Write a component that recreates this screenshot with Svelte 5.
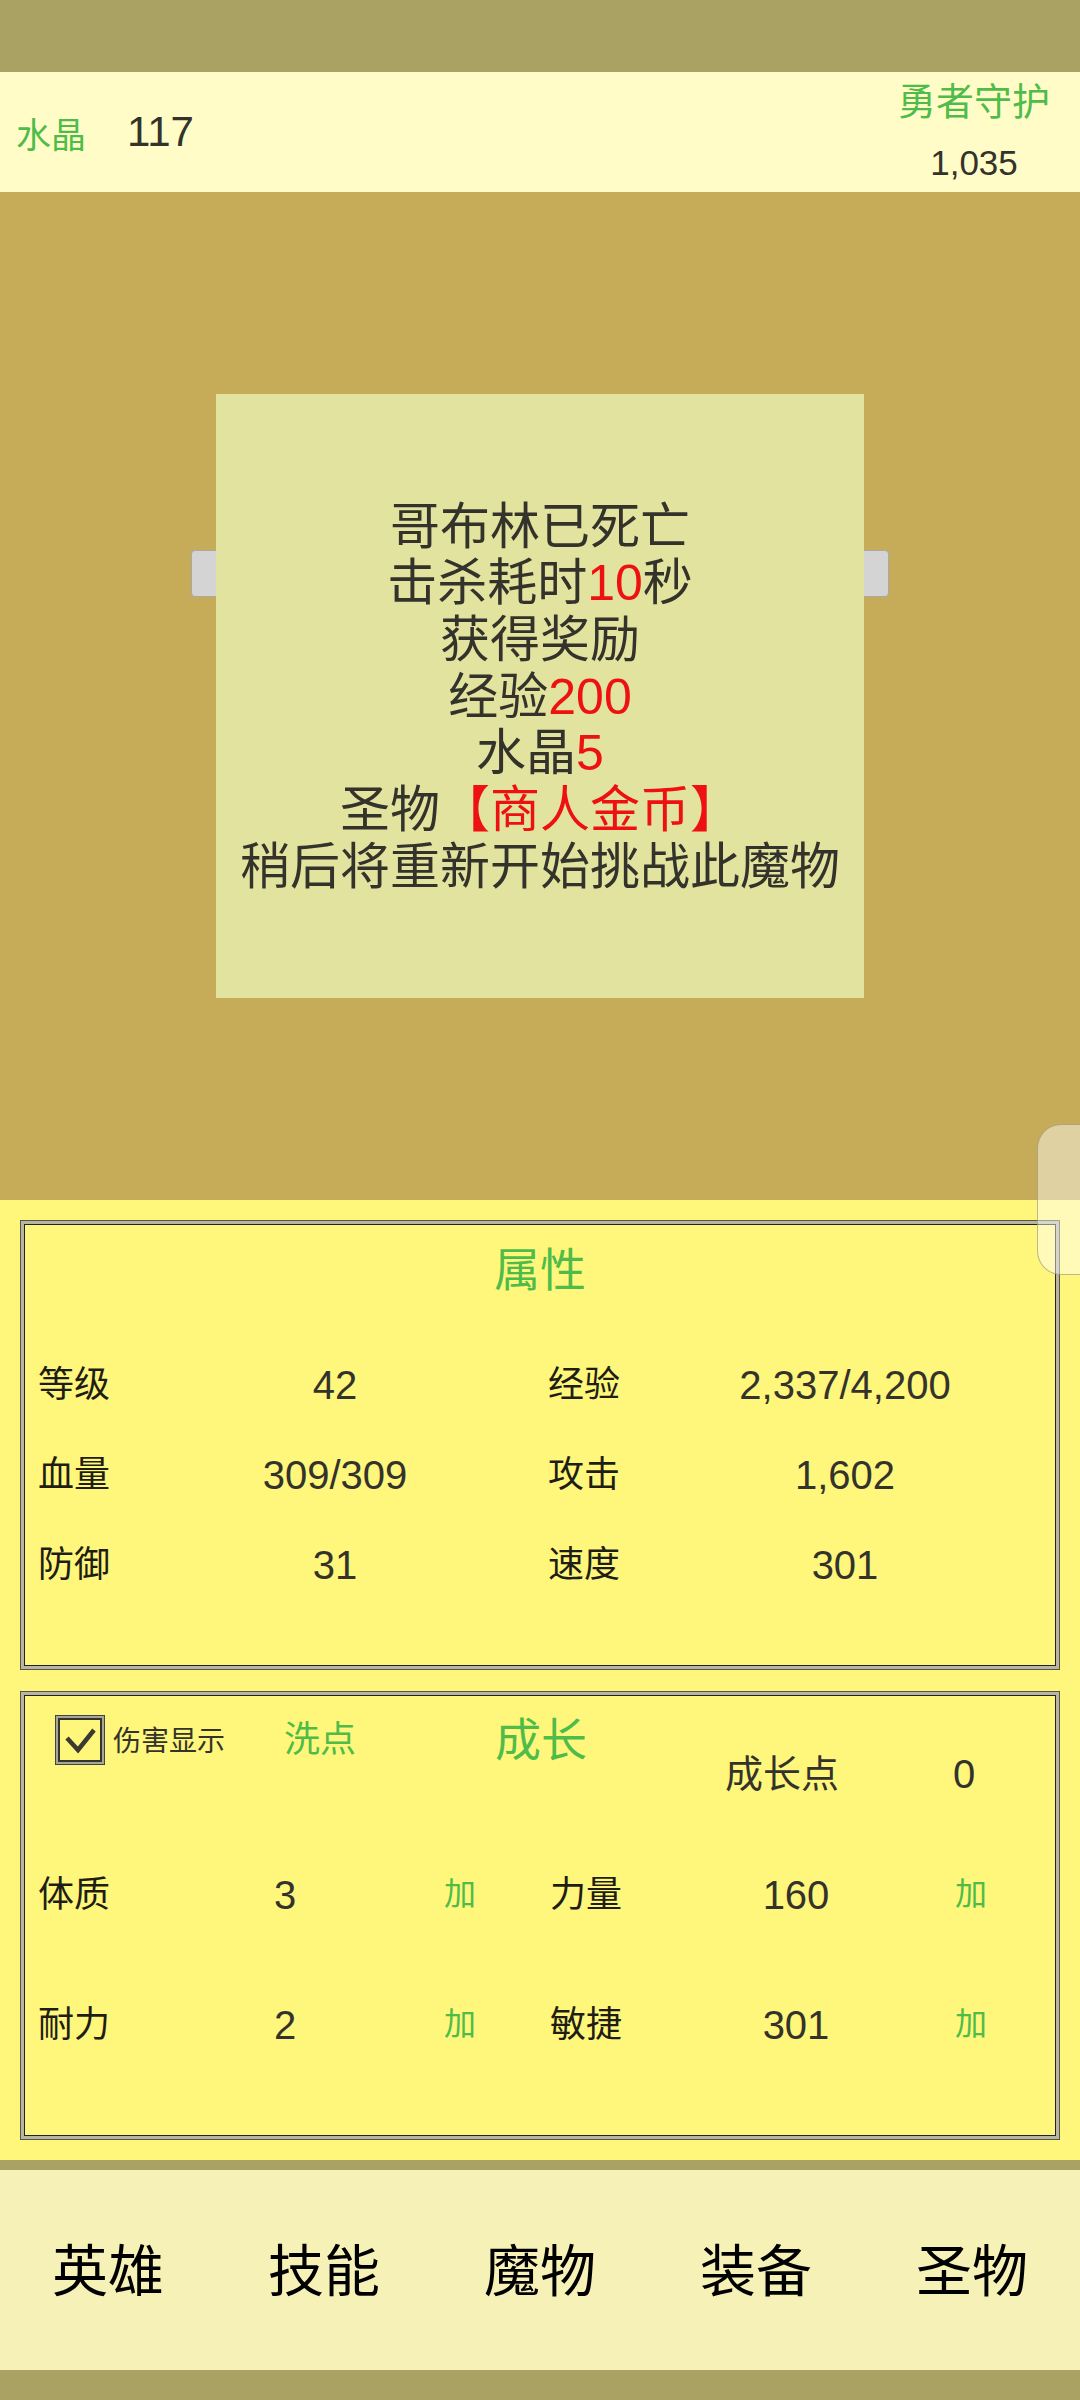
<script>
  const stats = [
    ["等级", "42", "经验", "2,337/4,200"],
    ["血量", "309/309", "攻击", "1,602"],
    ["防御", "31", "速度", "301"],
  ];
  const growth = [
    ["体质", "3", "力量", "160"],
    ["耐力", "2", "敏捷", "301"],
  ];
  const tabs = ["英雄", "技能", "魔物", "装备", "圣物"];
</script>

<div class="page">
  <div class="band top"></div>

  <header class="topbar">
    <div class="crystal">
      <span class="green crystal-label">水晶</span>
      <span class="crystal-num">117</span>
    </div>
    <div class="guard">
      <span class="green guard-label">勇者守护</span>
      <span class="guard-num">1,035</span>
    </div>
  </header>

  <section class="stage">
    <div class="dialog-wrap">
      <div class="dialog-tabs"></div>
      <div class="dialog">
        <div>哥布林已死亡</div>
        <div>击杀耗时<span class="red">10</span>秒</div>
        <div>获得奖励</div>
        <div>经验<span class="red">200</span></div>
        <div>水晶<span class="red">5</span></div>
        <div>圣物<span class="red">【商人金币】</span></div>
        <div>稍后将重新开始挑战此魔物</div>
      </div>
    </div>
  </section>

  <section class="panel">
    <div class="box stats-box">
      <div class="green box-title">属性</div>
      <div class="stats">
        {#each stats as row}
          <span class="label">{row[0]}</span>
          <span class="value">{row[1]}</span>
          <span class="label right">{row[2]}</span>
          <span class="value">{row[3]}</span>
        {/each}
      </div>
    </div>

    <div class="box growth-box">
      <div class="growth-head">
        <span class="check">
          <svg viewBox="0 0 50 50" width="50" height="50">
            <path d="M12 23 L23 35 L39 15" fill="none" stroke="#3a3a30" stroke-width="4.5" />
          </svg>
        </span>
        <span class="check-label">伤害显示</span>
        <span class="green reset">洗点</span>
        <span class="green growth-title">成长</span>
        <span class="points-label">成长点</span>
        <span class="value points">0</span>
      </div>
      <div class="growth">
        {#each growth as row}
          <span class="label">{row[0]}</span>
          <span class="value">{row[1]}</span>
          <span class="green add">加</span>
          <span></span>
          <span class="label">{row[2]}</span>
          <span class="value">{row[3]}</span>
          <span class="green add">加</span>
        {/each}
      </div>
    </div>
  </section>

  <div class="band thin"></div>

  <nav class="tabs">
    {#each tabs as t}
      <span class="tab">{t}</span>
    {/each}
  </nav>

  <div class="band bottom"></div>

  <div class="float-handle"></div>
</div>

<style>
  :global(body) {
    margin: 0;
  }

  .page {
    position: relative;
    width: 1080px;
    height: 2400px;
    overflow: hidden;
    font-family: "Liberation Sans", "Noto Sans CJK SC", sans-serif;
    color: #33332b;
  }

  .band {
    background: #a9a262;
  }
  .band.top {
    height: 72px;
  }
  .band.thin {
    height: 10px;
  }
  .band.bottom {
    height: 30px;
  }

  .green {
    color: #4fbc4a;
  }
  .red {
    color: #ee1111;
  }

  .topbar {
    height: 120px;
    background: #fffcc8;
    display: flex;
    justify-content: space-between;
    padding: 0 30px 0 16px;
  }
  .crystal {
    display: flex;
    align-items: center;
    gap: 41px;
  }
  .crystal-label {
    font-size: 35px;
  }
  .crystal-num {
    font-size: 42px;
  }
  .guard {
    display: flex;
    flex-direction: column;
    align-items: center;
    padding-top: 8px;
    gap: 18px;
  }
  .guard-label {
    font-size: 38px;
    line-height: 44px;
  }
  .guard-num {
    font-size: 35px;
    line-height: 42px;
  }

  .stage {
    height: 1008px;
    background: #c6ac58;
    display: flex;
    justify-content: center;
    padding-top: 202px;
    box-sizing: border-box;
  }
  .dialog-wrap {
    position: relative;
    width: 648px;
    height: 604px;
  }
  .dialog-tabs {
    position: absolute;
    left: -25px;
    right: -25px;
    top: 156px;
    height: 47px;
    background: #d4d4d4;
    border: 1px solid #a9a9a2;
    border-radius: 4px;
    box-sizing: border-box;
  }
  .dialog {
    position: relative;
    height: 100%;
    box-sizing: border-box;
    padding-top: 2px;
    background: #e1e39e;
    display: flex;
    flex-direction: column;
    justify-content: center;
    align-items: center;
    font-size: 50px;
    line-height: 56.7px;
    white-space: nowrap;
  }

  .panel {
    height: 960px;
    background: #fff67c;
    box-sizing: border-box;
    padding: 20px;
    display: flex;
    flex-direction: column;
    gap: 21px;
  }
  .box {
    box-sizing: border-box;
    padding: 6px;
    box-shadow:
      inset 0 0 0 1px #55554a,
      inset 0 0 0 4px #b8b5a0,
      inset 0 0 0 5px #222;
  }
  .stats-box {
    height: 450px;
  }
  .growth-box {
    height: 449px;
  }

  .box-title {
    text-align: center;
    font-size: 46px;
    line-height: 54px;
    padding-top: 17px;
  }
  .stats {
    display: grid;
    grid-template-columns: 92px 410px 102px 406px;
    grid-auto-rows: 90px;
    align-items: center;
    padding: 39px 0 0 12px;
  }
  .label {
    font-size: 36px;
    color: #1e1e14;
  }
  .label.right {
    padding-left: 8px;
  }
  .value {
    font-size: 40px;
    text-align: center;
    padding-top: 8px;
  }

  .growth-head {
    display: grid;
    grid-template-columns: 50px 179px 211px 230px 228px 1fr;
    align-items: start;
    padding: 18px 0 0 29px;
    height: 120px;
    box-sizing: border-box;
  }
  .check {
    width: 50px;
    height: 50px;
    box-shadow:
      inset 0 0 0 1px #444,
      inset 0 0 0 3px #aaa894,
      inset 0 0 0 5px #333;
  }
  .check svg {
    display: block;
  }
  .check-label {
    font-size: 28px;
    line-height: 53px;
    padding-left: 8px;
  }
  .reset {
    font-size: 36px;
    line-height: 50px;
  }
  .growth-title {
    font-size: 46px;
    line-height: 50px;
  }
  .points-label {
    font-size: 38px;
    line-height: 50px;
    margin-top: 34px;
  }
  .points {
    line-height: 50px;
    margin-top: 26px;
    text-align: left;
  }

  .growth {
    display: grid;
    grid-template-columns: 92px 310px 40px 70px 92px 308px 42px;
    grid-auto-rows: 130px;
    align-items: center;
    padding: 9px 0 0 12px;
  }
  .add {
    font-size: 32px;
    text-align: center;
  }

  .tabs {
    height: 200px;
    background: #f6f1b6;
    display: grid;
    grid-template-columns: repeat(5, 1fr);
    align-items: center;
    justify-items: center;
  }
  .tab {
    font-size: 56px;
    color: #000;
    padding-bottom: 8px;
  }

  .float-handle {
    position: absolute;
    left: 1037px;
    top: 1124px;
    width: 70px;
    height: 151px;
    box-sizing: border-box;
    border-radius: 24px;
    background: rgba(255, 255, 255, 0.45);
    border: 1px solid rgba(130, 120, 80, 0.5);
  }
</style>
